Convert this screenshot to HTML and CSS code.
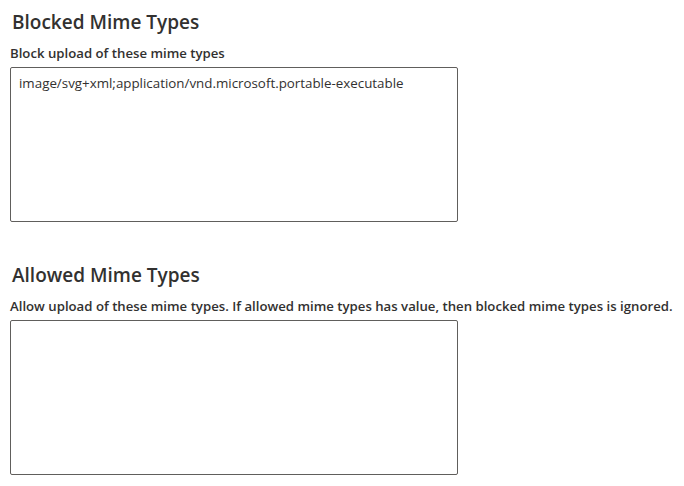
FILE: index.html
```html
<!DOCTYPE html>
<html lang="en">
<head>
    <meta charset="UTF-8">
    <title>Mime Types</title>
    <link rel="stylesheet" href="styles.css">
</head>
<body>
    <div class="page">
        <section class="field">
            <h2>Blocked Mime Types</h2>
            <label for="blocked">Block upload of these mime types</label>
            <textarea id="blocked">image/svg+xml;application/vnd.microsoft.portable-executable</textarea>
        </section>
        <section class="field">
            <h2>Allowed Mime Types</h2>
            <label for="allowed">Allow upload of these mime types. If allowed mime types has value, then blocked mime types is ignored.</label>
            <textarea id="allowed"></textarea>
        </section>
    </div>
</body>
</html>
```

FILE: styles.css
```css
body {
    margin: 0;
    background: #fff;
    color: #323130;
    font-family: 'Open Sans', 'Noto Sans', Arial, sans-serif;
}
.page {
    padding: 8px 10px 0 10px;
}
.field {
    margin-bottom: 39px;
}
.field:last-child {
    margin-bottom: 0;
}
h2 {
    margin: 0 0 0 2px;
    font-size: 19px;
    font-weight: 600;
    line-height: 28px;
}
label {
    display: block;
    margin-top: 8px;
    font-size: 13.2px;
    font-weight: 600;
    line-height: 18px;
}
textarea {
    display: block;
    box-sizing: border-box;
    width: 448px;
    height: 155px;
    margin-top: 5px;
    padding: 6px 8px;
    border: 1px solid #605e5c;
    border-radius: 2px;
    resize: none;
    font-family: inherit;
    font-size: 13.35px;
    line-height: 18px;
    color: #323130;
}
```
